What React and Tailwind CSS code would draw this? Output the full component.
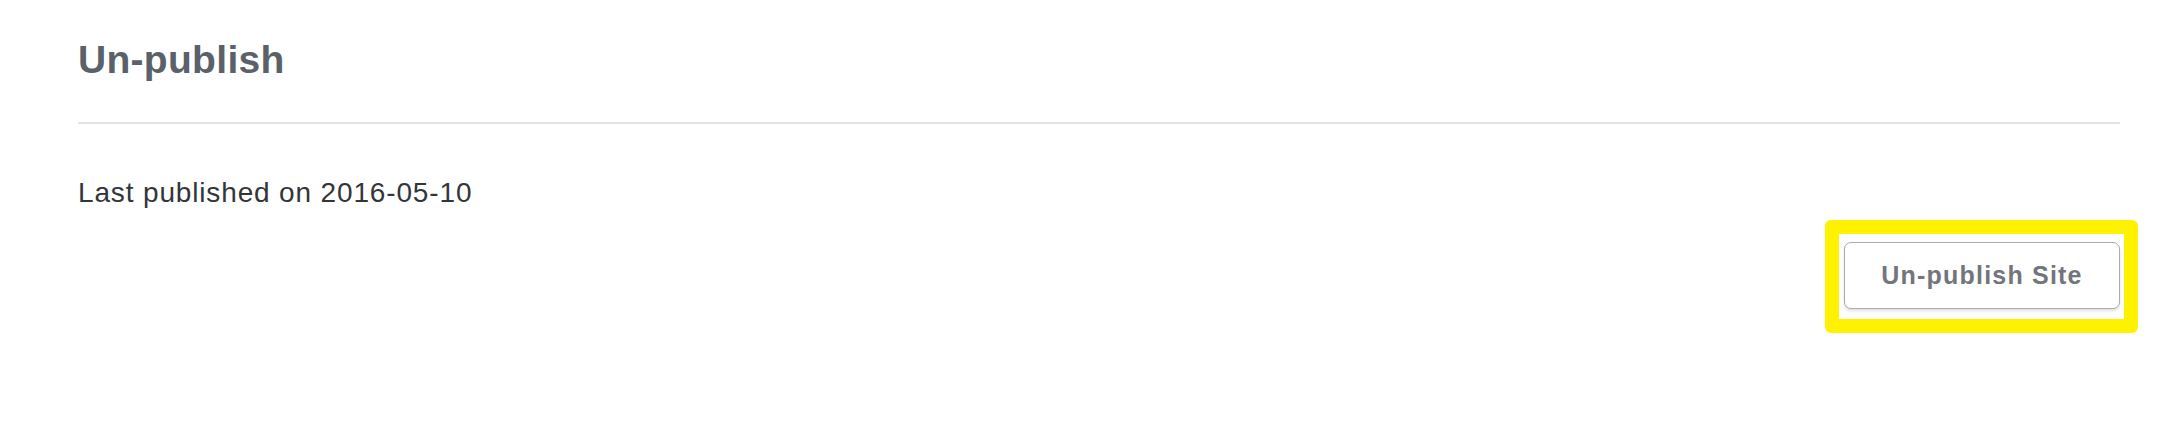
import React from 'react';

const font = { fontFamily: '"Liberation Sans", Arial, sans-serif' };

const UnpublishSection = () => {
  return (
    <div className="min-h-[430px] w-full bg-white pl-[78px] pr-[62px] pt-[36px]" style={font}>
      {/* Titulo */}
      <h1 className="text-[39px] leading-[48px] font-bold text-[#5b6169] tracking-[0.3px]">Un-publish</h1>
      <div className="mt-[38px] border-b-2 border-[#e3e3e3]" />

      <p className="mt-[52px] text-[28px] leading-[34px] text-[#333639] tracking-[0.85px]">Last published on 2016-05-10</p>

      <div className="mt-[32px] flex justify-end">
        <div className="relative">
          <button className="w-[276px] h-[67px] rounded-[7px] border-[1.5px] border-[#a9abb0] bg-white shadow-[0_2px_3px_rgba(0,0,0,0.12)] text-[25px] font-bold text-[#72757c] tracking-[1.2px]">
            Un-publish Site
          </button>
          {/* destaque amarelo */}
          <span className="pointer-events-none absolute -left-[19px] -top-[22px] -right-[18px] -bottom-[24px] rounded-[6px] border-[14px] border-[#fff200]" />
        </div>
      </div>
    </div>
  );
};

export default function App() {
  return <UnpublishSection />;
}
